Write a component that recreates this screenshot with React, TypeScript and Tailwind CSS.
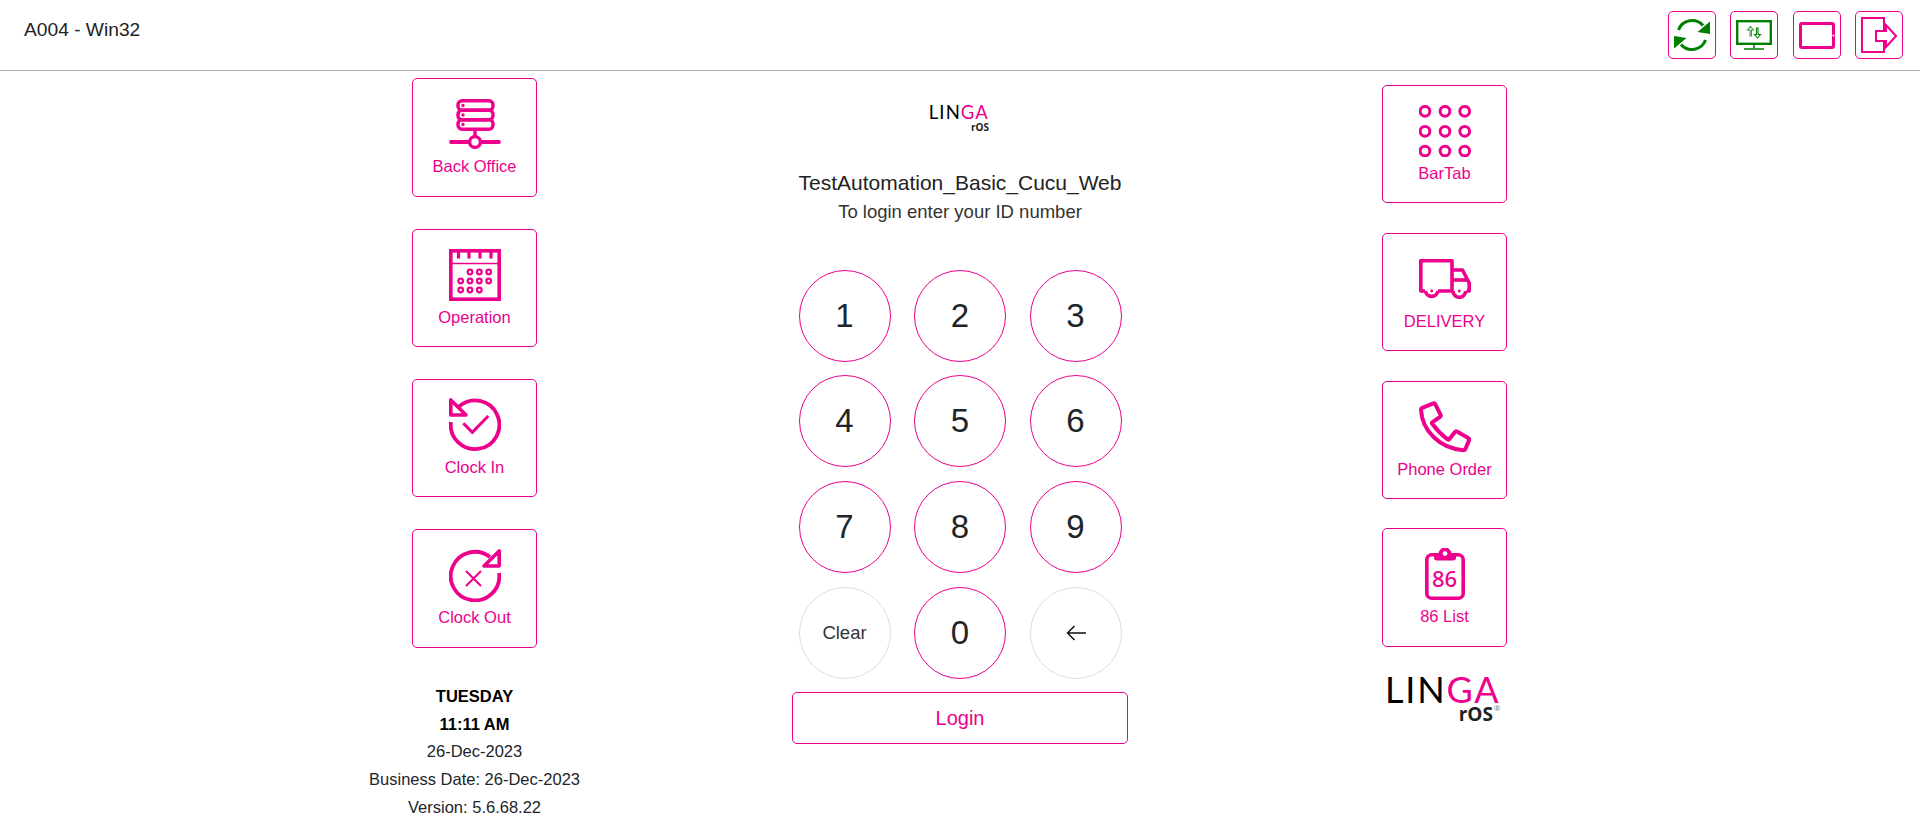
import React from 'react';

const PINK = '#ec008c';
const GREEN = '#008000';

function SyncIcon() {
  return (
    <svg width="36" height="34" viewBox="0 0 36 34" fill="none">
      <path d="M4.5 12 A14.5 14.5 0 0 1 29 7.5" stroke={GREEN} strokeWidth="3" />
      <path d="M36 3.5 L36 16 L23.5 14 Z" fill={GREEN} />
      <path d="M31.5 22 A14.5 14.5 0 0 1 7 26.5" stroke={GREEN} strokeWidth="3" />
      <path d="M0 30.5 L0 18 L12.5 20 Z" fill={GREEN} />
    </svg>
  );
}

function MonitorIcon() {
  return (
    <svg width="36" height="30" viewBox="0 0 36 30" fill="none">
      <rect x="1.2" y="1.2" width="33.6" height="22.6" stroke={GREEN} strokeWidth="2.4" />
      <path d="M18 24 V28 M8 29 H28" stroke={GREEN} strokeWidth="1.6" />
      <path d="M14 16 V10 H11.5 L14.5 6.5 L17.5 10 H15.5 V16 Z" stroke="#3f9a3f" strokeWidth="1.1" />
      <path d="M20.5 8 V14.5 H18.5 L21.5 18 L24.5 14.5 H22 V8 Z" stroke={GREEN} strokeWidth="1.1" />
    </svg>
  );
}

function TabletIcon() {
  return (
    <svg width="36" height="27" viewBox="0 0 36 27" fill="none">
      <rect x="1.5" y="1.5" width="33" height="24" rx="1.5" stroke={PINK} strokeWidth="3" />
      <circle cx="34.4" cy="13.5" r="1" fill="#fff" />
    </svg>
  );
}

function ExitIcon() {
  return (
    <svg width="36" height="36" viewBox="0 0 36 36" fill="none" stroke={PINK} strokeWidth="2">
      <path d="M23 14 V1 H1 V35 H23 V24" />
      <path d="M15 14 H25 V8 L35 19 L25 30 V24 H15 Z" />
    </svg>
  );
}

function ServerIcon() {
  return (
    <svg width="52" height="50" viewBox="0 0 52 50" fill="none" stroke={PINK} strokeWidth="3.4">
      <rect x="9" y="1.7" width="35" height="9.5" rx="4" />
      <rect x="9" y="11.2" width="35" height="9.5" rx="4" />
      <rect x="9" y="20.7" width="35" height="9.5" rx="4" />
      <circle cx="14" cy="6.4" r="1.7" fill={PINK} stroke="none" />
      <circle cx="14" cy="16" r="1.7" fill={PINK} stroke="none" />
      <circle cx="14" cy="25.4" r="1.7" fill={PINK} stroke="none" />
      <path d="M26 30 V38" />
      <path d="M2 43 H50" strokeLinecap="round" strokeWidth="3.8" />
      <circle cx="26" cy="43" r="5.4" fill="#fff" />
    </svg>
  );
}

function CalendarIcon() {
  const dots = [
    [21, 23], [30.3, 23], [39.7, 23],
    [11.7, 32], [21, 32], [30.3, 32], [39.7, 32],
    [11.7, 41], [21, 41], [30.3, 41],
  ];
  return (
    <svg width="52" height="52" viewBox="0 0 52 52" fill="none" stroke={PINK}>
      <rect x="1.8" y="1.8" width="48.4" height="48.4" strokeWidth="3.6" />
      <path d="M2 14.5 H50" strokeWidth="1.6" />
      <path d="M9.5 3 V9.5 M20 3 V9.5 M31 3 V9.5 M42 3 V9.5" strokeWidth="3.2" />
      {dots.map(([x, y]) => (
        <circle key={`${x}-${y}`} cx={x} cy={y} r="2.3" strokeWidth="2.2" />
      ))}
    </svg>
  );
}

function ClockInIcon() {
  return (
    <svg width="52" height="53" viewBox="0 0 52 53" fill="none" stroke={PINK}>
      <path d="M10 8.5 A24.3 24.3 0 1 1 1.9 24" strokeWidth="3.8" />
      <path d="M1.8 2 V17 H17 Z" strokeWidth="3.6" fill="#fff" strokeLinejoin="round" />
      <path d="M14.3 25.3 L23.3 34.3 L39.3 18" strokeWidth="3" />
    </svg>
  );
}

function ClockOutIcon() {
  return (
    <svg width="52" height="53" viewBox="0 0 52 53" fill="none" stroke={PINK}>
      <path d="M41 8 A24.3 24.3 0 1 0 50.1 24" strokeWidth="3.8" />
      <path d="M50.2 2 V17 H35 Z" strokeWidth="3.6" fill="#fff" strokeLinejoin="round" />
      <path d="M17 22 L32 37 M32 22 L17 37" strokeWidth="2" />
    </svg>
  );
}

function BarTabIcon() {
  const pts = [6, 26, 45.7];
  return (
    <svg width="52" height="52" viewBox="0 0 52 52" fill="none" stroke={PINK} strokeWidth="3">
      {pts.map((y) =>
        pts.map((x) => <circle key={`${x}-${y}`} cx={x} cy={y + 0.3} r="4.85" />)
      )}
    </svg>
  );
}

function TruckIcon() {
  return (
    <svg width="52" height="40" viewBox="0 0 52 40" fill="none" stroke={PINK} strokeWidth="3.6" strokeLinejoin="round">
      <path d="M6 32 H1.8 V1.8 H33 V32 H19" />
      <path d="M34 11 H43.5 L50.2 24 V32 H47.5" />
      <path d="M34 21 H49" />
      <path d="M6.5 32 A6.2 6.2 0 0 0 18.8 32" />
      <path d="M34 32 A6.2 6.2 0 0 0 46.6 32" />
      <circle cx="12.7" cy="32" r="1.4" fill={PINK} stroke="none" />
      <circle cx="40.3" cy="32" r="1.4" fill={PINK} stroke="none" />
    </svg>
  );
}

function PhoneIcon() {
  return (
    <svg width="52" height="52" viewBox="0 0 52 52" fill="none" stroke={PINK} strokeWidth="4" strokeLinejoin="round">
      <path d="M3.2 6.8 L14.4 2.4 Q15.6 2 16.2 3.2 L21.6 13.8 Q22.2 15 21 15.8 L13.2 21.4 Q12.6 22 13.2 22.8 Q20 32 28.6 38.4 Q29.6 39 30.2 38.2 L36.2 30.8 Q37 30 38 30.6 L49.6 37.2 Q50.6 38 50.2 39 L46.6 47.6 Q46 49.2 44.4 49.2 C21 47.5 3 30 2 8.6 Q2 7.2 3.2 6.8 Z" />
    </svg>
  );
}

function ClipboardIcon() {
  return (
    <div className="relative w-[40px] h-[52px]">
      <svg width="40" height="52" viewBox="0 0 40 52" fill="none">
        <rect x="1.8" y="6.8" width="36.4" height="43.4" rx="5" stroke={PINK} strokeWidth="3.6" />
        <path d="M9 6 H13.5 A6.5 6.5 0 0 1 26.5 6 H31 V9.5 Q31 12.5 28 12.5 H12 Q9 12.5 9 9.5 Z" fill={PINK} />
        <circle cx="20" cy="5.6" r="2.4" fill="#fff" />
      </svg>
      <span className="absolute left-0 right-0 top-[17px] text-center text-[22px] leading-[26px] font-medium text-[#ec008c] font-['Noto_Sans',sans-serif]">
        86
      </span>
    </div>
  );
}

function ArrowBack() {
  return (
    <svg width="20" height="16" viewBox="0 0 20 16" fill="none" stroke="#111" strokeWidth="1.5">
      <path d="M20 8 H1.5 M8.5 1 L1.5 8 L8.5 15" />
    </svg>
  );
}

function Tile({ label, icon }: { label: string; icon: React.ReactNode }) {
  return (
    <button className="w-[125px] h-[118.4px] shrink-0 flex flex-col items-center pt-[19px] border border-[#ec008c] rounded-[5px] bg-white text-[#ec008c] text-[16.5px]">
      <span className="h-[52px] flex items-center justify-center">{icon}</span>
      <span className="mt-[4px] leading-6">{label}</span>
    </button>
  );
}

function TopButton({ children }: { children: React.ReactNode }) {
  return (
    <button className="w-[48px] h-[48px] flex items-center justify-center border border-[#ec008c] rounded-[5px] bg-white">
      {children}
    </button>
  );
}

function KeyButton({ children, muted }: { children: React.ReactNode; muted?: boolean }) {
  return (
    <button
      className={
        muted
          ? 'w-[92px] h-[92px] rounded-full border border-[#dddddd] flex items-center justify-center text-[18.5px] text-[#333]'
          : 'w-[92px] h-[92px] rounded-full border border-[#ec008c] flex items-center justify-center text-[33px] text-[#212529]'
      }
    >
      {children}
    </button>
  );
}

function Logo({ big }: { big?: boolean }) {
  return (
    <div className={big ? 'flex flex-col items-end w-[112px]' : 'flex flex-col items-end w-[58px]'}>
      <div
        className={
          big
            ? "font-['Lato',sans-serif] font-normal text-[36px] leading-[30px] tracking-[1.8px] whitespace-nowrap"
            : "font-['Lato',sans-serif] font-normal text-[18.5px] leading-[15px] tracking-[1.1px] whitespace-nowrap"
        }
      >
        <span className="text-black">LIN</span>
        <span className="text-[#ec008c]">GA</span>
      </div>
      <div
        className={
          big
            ? "-mt-[1px] flex items-start font-['Open_Sans',sans-serif] font-bold text-[19px] leading-[22px] text-[#222]"
            : "mt-[1px] font-['Open_Sans',sans-serif] font-bold text-[10px] leading-[12px] text-[#222]"
        }
      >
        rOS
        {big && <span className="ml-[1px] text-[8px] leading-[10px] font-normal text-[#777]">®</span>}
      </div>
    </div>
  );
}

export default function App() {
  const keys = ['1', '2', '3', '4', '5', '6', '7', '8', '9'];
  return (
    <div className="h-[839px] bg-white overflow-hidden font-['Liberation_Sans',Arial,sans-serif] text-[#212529]">
      <header className="h-[71px] border-b border-[#b5b5b5] flex items-start justify-between pl-6 pr-[17px]">
        <div className="mt-[18px] text-[19.2px] leading-6 text-[#222]">A004 - Win32</div>
        <div className="mt-[11px] flex gap-[14.3px]">
          <TopButton><SyncIcon /></TopButton>
          <TopButton><MonitorIcon /></TopButton>
          <TopButton><TabletIcon /></TopButton>
          <TopButton><ExitIcon /></TopButton>
        </div>
      </header>

      <main className="w-[1180px] mx-auto flex justify-between">
        {/* Left column */}
        <div className="w-[210px] pr-px flex flex-col items-center pt-[7.2px]">
          <div className="flex flex-col gap-[32px]">
            <Tile label="Back Office" icon={<ServerIcon />} />
            <Tile label="Operation" icon={<CalendarIcon />} />
            <Tile label="Clock In" icon={<ClockInIcon />} />
            <Tile label="Clock Out" icon={<ClockOutIcon />} />
          </div>
          <div className="mt-[35px] text-center text-[16.5px] leading-[27.8px] whitespace-nowrap">
            <div className="font-bold text-black">TUESDAY</div>
            <div className="font-bold text-black">11:11 AM</div>
            <div>26-Dec-2023</div>
            <div>Business Date: 26-Dec-2023</div>
            <div>Version: 5.6.68.22</div>
          </div>
        </div>

        {/* Login column */}
        <div className="w-[336px] flex flex-col items-center pt-[34px]">
          <Logo />
          <div className="mt-[36px] text-[21px] leading-7 text-[#222] whitespace-nowrap">TestAutomation_Basic_Cucu_Web</div>
          <div className="mt-[1px] text-[18.5px] leading-7 text-[#333]">To login enter your ID number</div>
          <div className="mt-[43.5px] grid grid-cols-3 gap-x-[23.5px] gap-y-[13.7px]">
            {keys.map((k) => (
              <KeyButton key={k}>{k}</KeyButton>
            ))}
            <KeyButton muted>Clear</KeyButton>
            <KeyButton>0</KeyButton>
            <KeyButton muted><ArrowBack /></KeyButton>
          </div>
          <button className="mt-[13.5px] w-[336px] h-[52px] border border-[#ec008c] rounded-[5px] text-[20px] text-[#ec008c]">
            Login
          </button>
        </div>

        {/* Right column */}
        <div className="w-[210px] pr-px flex flex-col items-center pt-[14px]">
          <div className="flex flex-col gap-[29.4px]">
            <Tile label="BarTab" icon={<BarTabIcon />} />
            <Tile label="DELIVERY" icon={<TruckIcon />} />
            <Tile label="Phone Order" icon={<PhoneIcon />} />
            <Tile label="86 List" icon={<ClipboardIcon />} />
          </div>
          <div className="mt-[27px]">
            <Logo big />
          </div>
        </div>
      </main>
    </div>
  );
}
